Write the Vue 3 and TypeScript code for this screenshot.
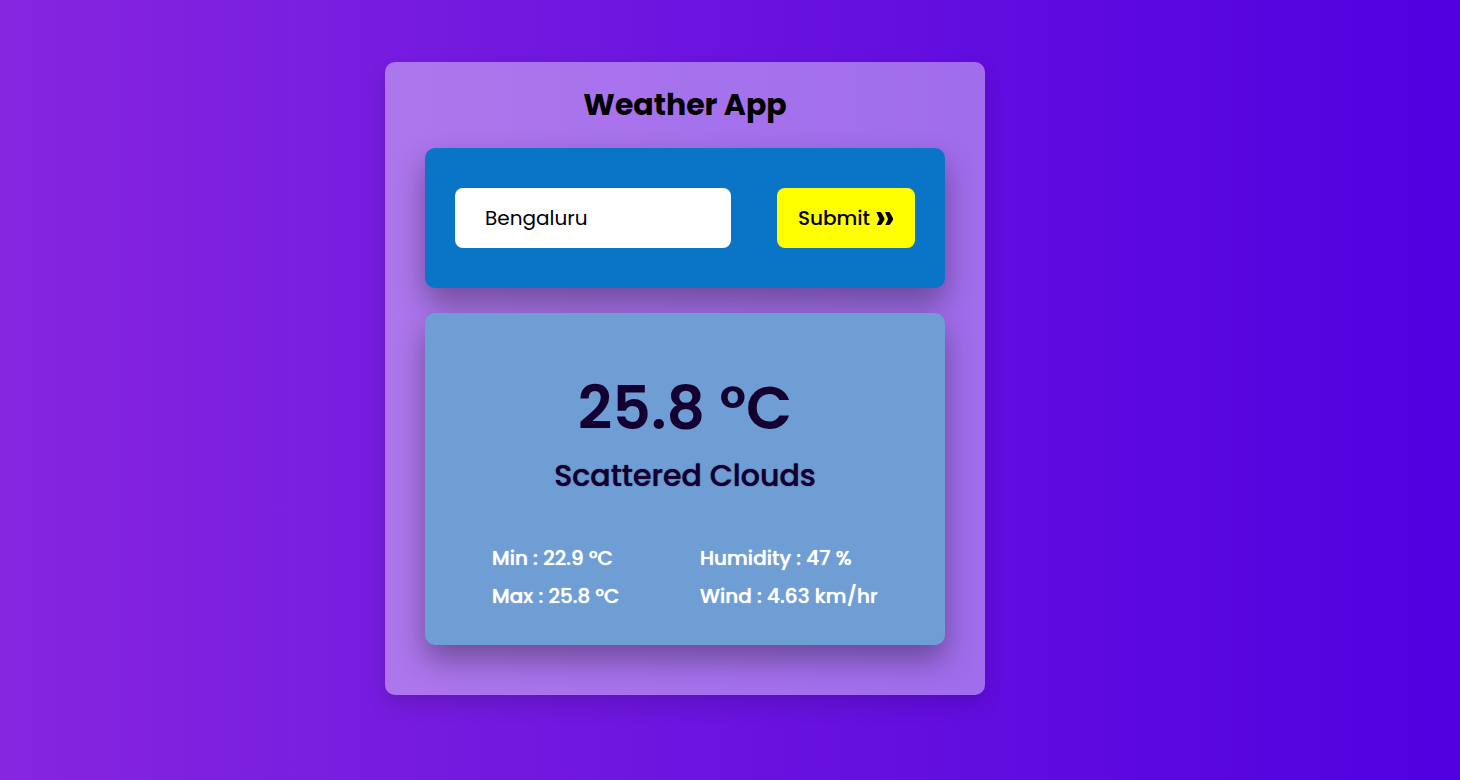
<script setup lang="ts">
import { ref } from 'vue'

const city = ref('Bengaluru')

const weather = {
  temperature: '25.8 °C',
  description: 'Scattered Clouds',
  details: [
    'Min : 22.9 °C',
    'Humidity : 47 %',
    'Max : 25.8 °C',
    'Wind : 4.63 km/hr',
  ],
}
</script>

<template>
  <main class="page">
    <section class="app">
      <h1 class="title">Weather App</h1>
      <form class="search" @submit.prevent>
        <input v-model="city" class="city" type="text" aria-label="City" />
        <button class="submit" type="submit">
          Submit
          <svg class="chevrons" viewBox="0 0 18 16" aria-hidden="true">
            <path d="M0.4 2H4.2Q5 2 5.4 2.8L8.3 8Q8.7 9 8.3 10L5.6 14.2Q5 15 4.2 15H0.7L3.5 9Z" />
            <path d="M9 2H12.8Q13.6 2 14 2.8L16.9 8Q17.3 9 16.9 10L14.2 14.2Q13.6 15 12.8 15H9.3L12.1 9Z" />
          </svg>
        </button>
      </form>
      <section class="report">
        <p class="temperature">{{ weather.temperature }}</p>
        <p class="description">{{ weather.description }}</p>
        <ul class="details">
          <li v-for="item in weather.details" :key="item">{{ item }}</li>
        </ul>
      </section>
    </section>
  </main>
</template>

<style>
body {
  margin: 0;
}
</style>

<style scoped>
.page {
  box-sizing: border-box;
  min-height: 100vh;
  padding: 62px 90px 62px 0;
  background: linear-gradient(to right, #8526df, #5000e0);
  font-family: Poppins, Inter, "Open Sans", sans-serif;
  color: #000;
}

.app {
  box-sizing: border-box;
  width: 100%;
  max-width: 600px;
  margin: 0 auto;
  padding: 20px 40px 50px;
  border-radius: 10px;
  background: rgba(255, 255, 255, 0.4);
  box-shadow: 0 10px 20px rgba(0, 0, 0, 0.14);
}

.title {
  margin: 0 0 21px;
  font-size: 30px;
  line-height: 45px;
  font-weight: 700;
  text-align: center;
}

.search {
  display: flex;
  justify-content: space-between;
  gap: 20px;
  padding: 40px 30px;
  border-radius: 10px;
  background: #0a74c6;
  box-shadow: 0 15px 30px rgba(0, 0, 0, 0.35);
}

.city,
.submit {
  box-sizing: border-box;
  height: 60px;
  border: 0;
  border-radius: 8px;
  font-family: inherit;
  font-size: 20px;
  color: #000;
}

.city {
  flex: 0 1 60%;
  min-width: 0;
  padding: 0 30px;
  background: #fff;
  outline: none;
}

.submit {
  flex: 0 0 30%;
  display: flex;
  align-items: center;
  justify-content: center;
  gap: 6px;
  padding: 0;
  background: #ff0;
  font-weight: 500;
}

.chevrons {
  width: 18px;
  height: 16px;
}

.report {
  margin-top: 25px;
  padding: 60px 30px 30px;
  border-radius: 10px;
  background: #6f9ed4;
  box-shadow: 0 15px 30px rgba(0, 0, 0, 0.35);
}

.temperature {
  margin: 0;
  font-size: 60px;
  line-height: 70px;
  font-weight: 600;
  text-align: center;
  color: #130030;
}

.description {
  margin: 10px 0 40px;
  font-size: 30px;
  line-height: 46px;
  font-weight: 500;
  text-align: center;
  text-shadow: 0 0 1px currentColor;
  color: #130030;
}

.details {
  display: grid;
  grid-template-columns: 1fr 1fr;
  column-gap: 30px;
  margin: 0;
  padding: 0 37px;
  list-style: none;
  font-size: 20px;
  line-height: 38px;
  font-weight: 500;
  text-shadow: 0 0 1px currentColor;
  white-space: nowrap;
  color: #fff;
}
</style>
